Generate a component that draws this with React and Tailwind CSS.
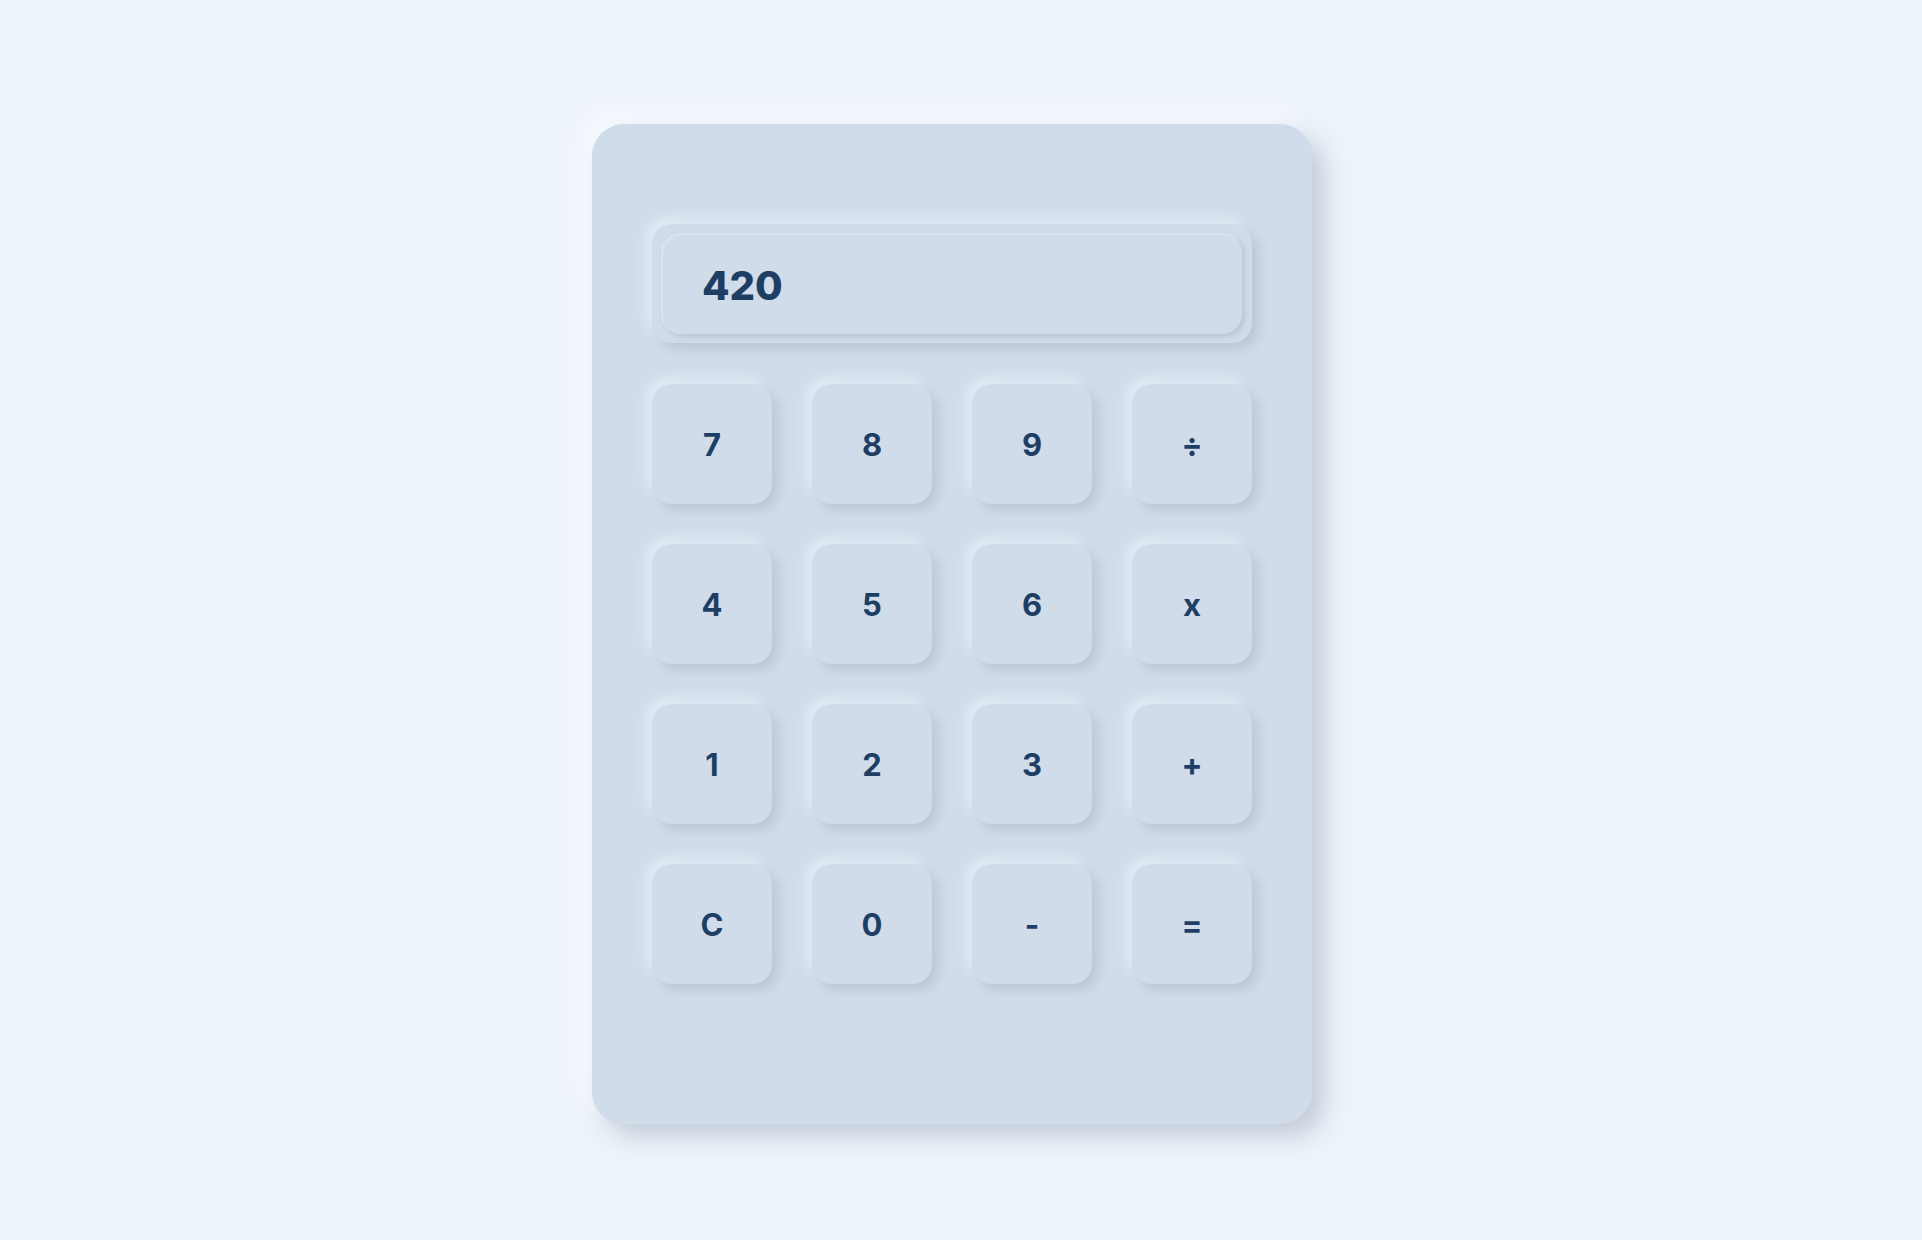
import React from "react";

const keys = ["7", "8", "9", "÷", "4", "5", "6", "x", "1", "2", "3", "+", "C", "0", "-", "="];

export default function App() {
  return (
    <div
      className="min-h-screen w-full bg-[#edf3fa] flex items-center justify-center pr-[18px] pt-[8px]"
      style={{ fontFamily: "Inter, 'Liberation Sans', sans-serif" }}
    >
      <div className="w-[720px] h-[1000px] rounded-[32px] bg-[#d0dcea] px-[60px] pt-[100px] shadow-[12px_12px_24px_#c3ccd8,-12px_-12px_24px_#f8fbff]">
        <div className="h-[119px] rounded-[20px] bg-[#d0dcea] p-[9px] pr-[10px] shadow-[6px_6px_12px_#b9c6d6,-6px_-6px_12px_#e4ecf6]">
          <div className="h-full rounded-[20px] bg-[#d0dcea] pl-[41px] pt-[5px] flex items-center shadow-[3px_3px_5px_#bac7d7,inset_2px_2px_1px_#dae4f0]">
            <span className="text-[40px] font-extrabold text-[#1e3f63] leading-none">420</span>
          </div>
        </div>
        <div className="mt-[41px] grid grid-cols-4 gap-[40px]">
          {keys.map((k) => (
            <button
              key={k}
              className="h-[120px] w-[120px] rounded-[20px] bg-[#d0dcea] flex items-center justify-center pt-[2px] text-[31px] font-bold text-[#1e3f63] shadow-[6px_6px_12px_#b9c6d6,-6px_-6px_12px_#e4ecf6]"
            >
              {k}
            </button>
          ))}
        </div>
      </div>
    </div>
  );
}
